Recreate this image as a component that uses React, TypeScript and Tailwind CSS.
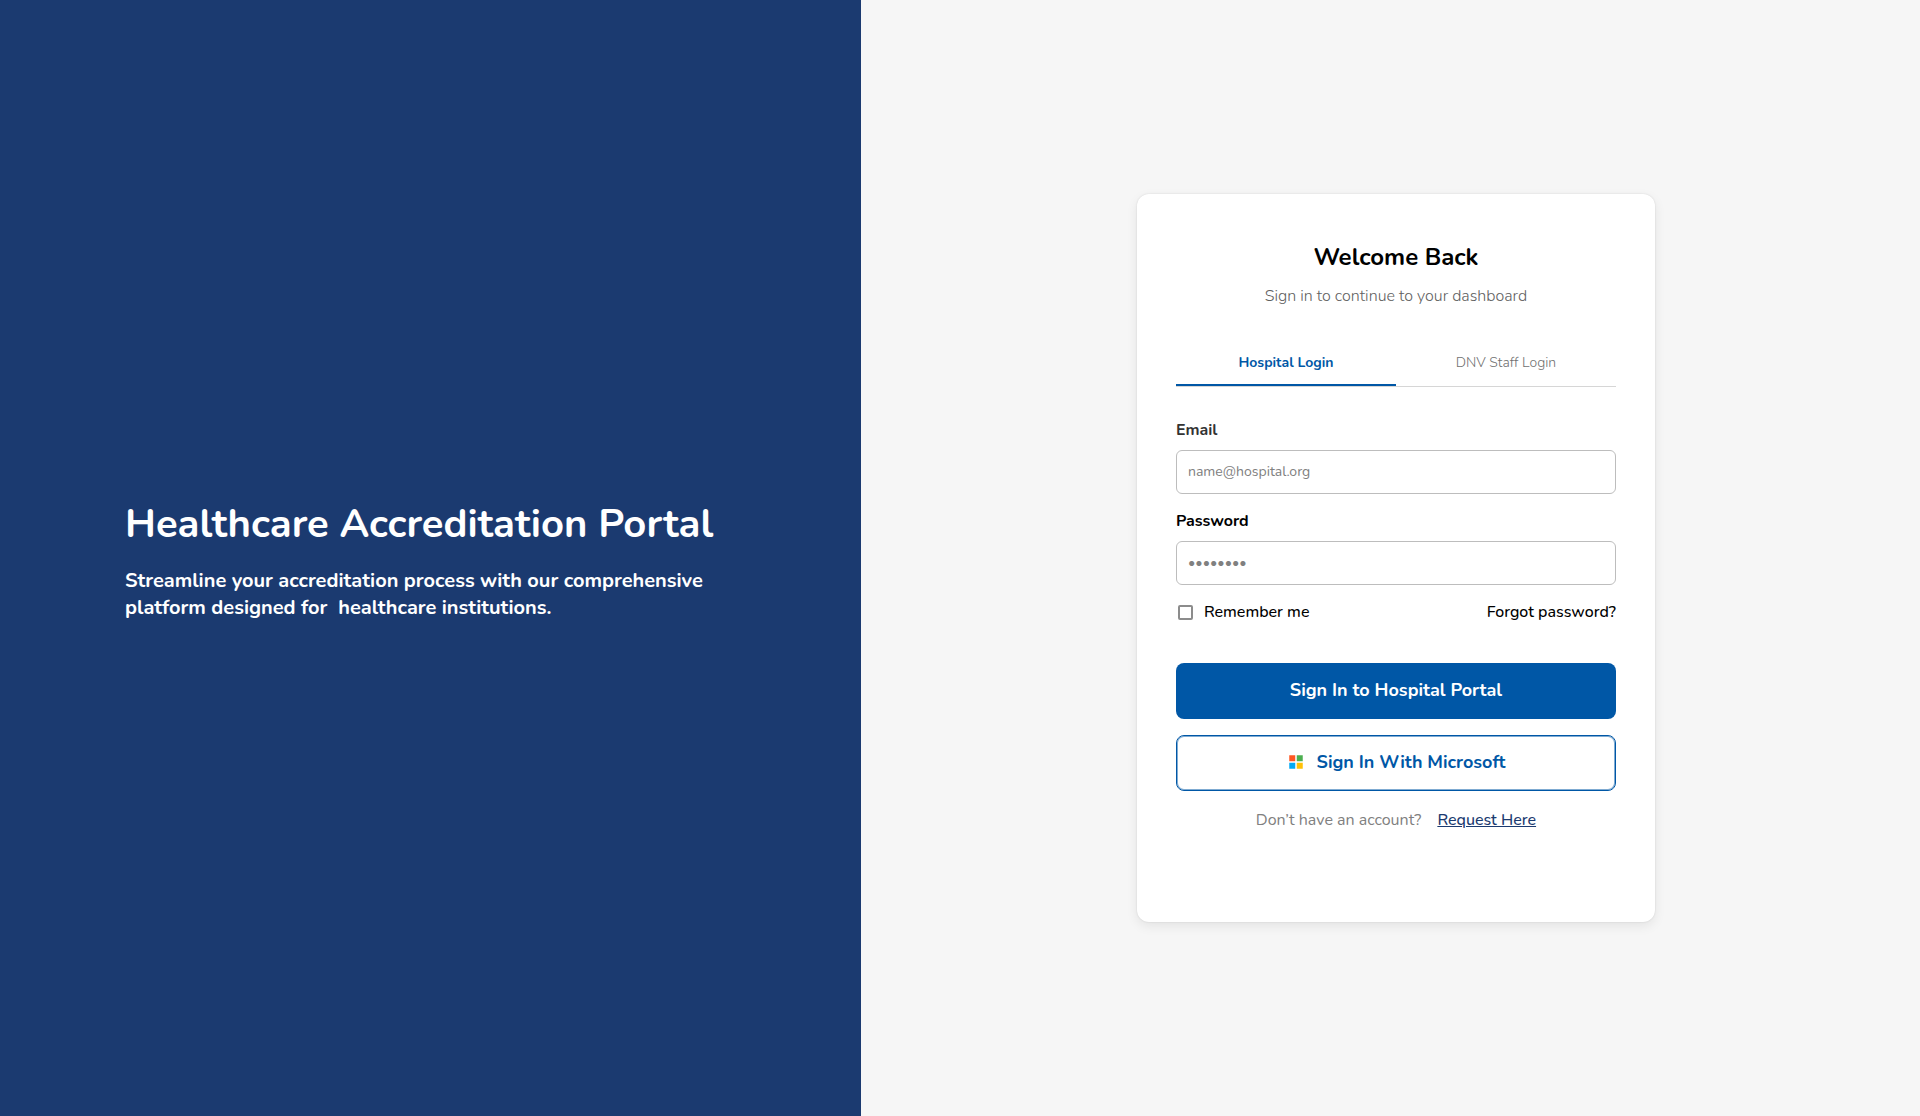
import { useState } from "react";

function MicrosoftIcon() {
  return (
    <svg viewBox="0 0 48 48" className="size-[18px]" aria-hidden="true">
      <path fill="#ff5722" d="M6 6H22V22H6z" />
      <path fill="#4caf50" d="M26 6H42V22H26z" />
      <path fill="#ffc107" d="M26 26H42V42H26z" />
      <path fill="#03a9f4" d="M6 26H22V42H6z" />
    </svg>
  );
}

const tabs = [
  { id: "hospital", label: "Hospital Login" },
  { id: "staff", label: "DNV Staff Login" },
];

const inputClass =
  "mt-2 h-11 w-full rounded-md border border-[#bdbdbd] bg-white px-[11px] pb-0.5 text-sm text-black outline-none placeholder:text-[#808080] placeholder:opacity-100";

export default function App() {
  const [active, setActive] = useState("hospital");

  return (
    <div className="flex min-h-screen bg-[#f6f6f6] font-['Nunito','Open_Sans',sans-serif] text-black">
      <aside className="flex w-[44.84%] flex-col justify-center bg-[#1b3a70] pt-0.5 pr-8 pl-[125px] text-white">
        <h1 className="text-[40px] leading-[54px] font-bold">Healthcare Accreditation Portal</h1>
        <p className="mt-4 text-xl leading-[27px] font-bold whitespace-pre-wrap">
          Streamline your accreditation process with our comprehensive
          <br />
          {"platform designed for  healthcare institutions."}
        </p>
      </aside>

      <main className="flex flex-1 items-center justify-center pl-[11px]">
        <section className="w-full max-w-[518px] rounded-xl bg-white px-[39px] pt-[47px] pb-[90px] shadow-[0_4px_12px_rgba(0,0,0,0.08),0_0_2px_rgba(0,0,0,0.12)]">
          <header className="text-center">
            <h2 className="text-2xl leading-8 font-bold">Welcome Back</h2>
            <p className="mt-[11px] text-base leading-6 font-light text-[#606060]">Sign in to continue to your dashboard</p>
          </header>

          <div role="tablist" className="mt-[33px] grid grid-cols-2 border-b border-[#d6d6d6] text-sm leading-5">
            {tabs.map((tab) => (
              <button
                key={tab.id}
                type="button"
                role="tab"
                aria-selected={active === tab.id}
                onClick={() => setActive(tab.id)}
                className={
                  active === tab.id
                    ? "border-b-2 border-[#0057a6] pt-3 pb-[11px] font-bold text-[#0057a6]"
                    : "border-b-2 border-transparent pt-3 pb-[11px] font-light text-[#707070]"
                }
              >
                {tab.label}
              </button>
            ))}
          </div>

          <form className="mt-[31px] leading-6" onSubmit={(e) => e.preventDefault()}>
            <div>
              <label htmlFor="email" className="block font-bold text-[#333333]">
                Email
              </label>
              <input id="email" type="email" placeholder="name@hospital.org" className={inputClass} />
            </div>
            <div className="mt-[15px]">
              <label htmlFor="password" className="block font-bold">
                Password
              </label>
              <input id="password" type="password" placeholder="••••••••" className={inputClass} />
            </div>

            <div className="mt-[15px] flex items-center justify-between font-medium">
              <label htmlFor="remember" className="flex items-center gap-[11px] pl-0.5">
                <input
                  id="remember"
                  type="checkbox"
                  className="size-[15px] appearance-none rounded-xs border-2 border-[#8c8c8c] bg-white checked:bg-[#0057a6]"
                />
                Remember me
              </label>
              <a href="#forgot">Forgot password?</a>
            </div>

            <div className="mt-[39px] flex flex-col gap-4 text-lg font-bold">
              <button type="submit" className="h-14 rounded-lg bg-[#0057a6] pb-0.5 text-white">
                Sign In to Hospital Portal
              </button>
              <button
                type="button"
                className="flex h-14 items-center justify-center gap-3 rounded-lg border border-[#0057a6] bg-white pb-0.5 text-[#0057a6] shadow-[inset_0_0_0_1px_#0057a680]"
              >
                <MicrosoftIcon />
                Sign In With Microsoft
              </button>
            </div>
          </form>

          <p className="mt-[17px] flex justify-center gap-4 leading-6 text-[#808080]">
            <span>Don’t have an account?</span>
            <a href="#request" className="font-medium text-[#1b3a70] underline">
              Request Here
            </a>
          </p>
        </section>
      </main>
    </div>
  );
}
